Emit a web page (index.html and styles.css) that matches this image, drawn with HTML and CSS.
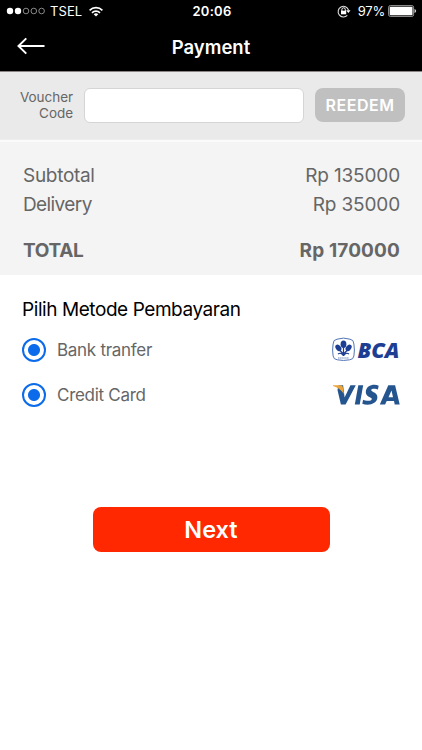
FILE: index.html
```html
<!DOCTYPE html>
<html lang="id">
<head>
<meta charset="utf-8">
<title>Payment</title>
<link rel="stylesheet" href="styles.css">
</head>
<body>
<header class="top">
  <div class="status">
    <div class="carrier">
      <svg class="dots" width="40" height="10" viewBox="0 0 40 10"><g fill="#fff"><circle cx="4" cy="5" r="3.2"/><circle cx="12" cy="5" r="3.2"/></g><g fill="none" stroke="#aaa" stroke-width=".8"><circle cx="20" cy="5" r="2.8"/><circle cx="27.8" cy="5" r="2.8"/><circle cx="35.6" cy="5" r="2.8"/></g></svg>
      <span class="network">TSEL</span>
      <svg class="wifi" width="14" height="11" viewBox="0 0 14 11"><g fill="none" stroke="#fff" stroke-width="1.7"><path d="M.6 4.3a9.2 9.2 0 0 1 12.8 0"/><path d="M3 6.8a5.8 5.8 0 0 1 8 0"/></g><path d="M4.7 8.2a3.4 3.4 0 0 1 4.6 0L7 10.6z" fill="#fff"/></svg>
    </div>
    <span class="clock">20:06</span>
    <div class="power">
      <svg class="lock" width="14" height="13" viewBox="0 0 14 13"><path d="M10.3 10.3A5.3 5.3 0 1 1 11.5 5" fill="none" stroke="#ddd" stroke-width="1.1"/><path d="M9.2 5.3h4.3l-2.1 2.8z" fill="#fff"/><path d="M4.9 6V4.5a1.7 1.7 0 0 1 3.4 0V6" fill="none" stroke="#fff"/><path d="M4 5.7h5.2v3.6H4z" fill="#fff"/></svg>
      <span class="percent">97%</span>
      <svg class="battery" width="29" height="12" viewBox="0 0 29 12"><rect x=".6" y=".6" width="25" height="10.8" rx="1.7" fill="none" stroke="#999"/><rect x="1.7" y="1.7" width="22.8" height="8.6" rx=".8" fill="#fff"/><path d="M26.5 4q1.7.3 1.7 2t-1.7 2z" fill="#ccc"/></svg>
    </div>
  </div>
  <div class="nav">
    <svg class="back" width="28" height="18" viewBox="0 0 28 18"><path d="M27.5 9H2M9.3 1.4 1.5 9l7.8 7.6" fill="none" stroke="#fff" stroke-width="2"/></svg>
    <h1 class="title">Payment</h1>
  </div>
</header>
<section class="voucher">
  <label class="voucher-label" for="code">Voucher<br>Code</label>
  <input class="voucher-input" id="code" type="text">
  <button class="redeem">REEDEM</button>
</section>
<section class="summary">
  <div class="line"><span class="subtotal">Subtotal</span><span class="amount">Rp 135000</span></div>
  <div class="line"><span class="delivery">Delivery</span><span class="amount">Rp 35000</span></div>
  <div class="line total"><span class="total-label">TOTAL</span><span class="total-amount">Rp 170000</span></div>
</section>
<main class="methods">
  <h2 class="heading">Pilih Metode Pembayaran</h2>
  <div class="method"><span class="radio"></span><span class="bank">Bank tranfer</span>
    <svg class="logo" width="70" height="26" viewBox="0 0 70 26">
      <path d="M7 2.200Q13.500 0 20 2.200 23.800 2.600 23.900 7q1 6 0 12-.5 3.500-4.200 3.800-6.200 1.300-12.400 0-3.700-.3-4.200-3.800-1-6 0-12Q3.200 2.600 7 2.200z" fill="#fff" stroke="#5374b5" stroke-width="1"/>
      <g fill="#1e3e93"><ellipse cx="13.500" cy="7.300" rx="2.900" ry="3.700"/><ellipse cx="8.400" cy="10.900" rx="2.500" ry="3.700" transform="rotate(-38 8.400 10.900)"/><ellipse cx="18.600" cy="10.900" rx="2.500" ry="3.700" transform="rotate(38 18.600 10.900)"/></g>
      <path d="M13.500 10v9M9 12.500l4 4M18 12.500l-4 4M8 17q3-2 5.200 1.500M19 17q-3-2-5.200 1.500" fill="none" stroke="#1e3e93" stroke-width="1.200"/>
      <path d="M8 21h11" stroke="#6c82b8" stroke-width="1" stroke-dasharray="1.500 .6"/>
      <text class="bca" x="27.500" y="20.800" textLength="42" lengthAdjust="spacingAndGlyphs">BCA</text>
    </svg>
  </div>
  <div class="method"><span class="radio"></span><span class="credit">Credit Card</span>
    <svg class="logo" width="70" height="26" viewBox="0 0 70 26">
      <path d="M8.500 3.200h4.600l1.500 12.300 5.800-12.300h5.400L15.600 22.500h-4.700L7.500 8z" fill="#25558f"/>
      <path d="M3 3.200h7.700q1.800 0 2.100 1.800l1.100 7Q10 5.800 3 4z" fill="#eaa43c"/>
      <path d="M28.300 3.200h4.900l-3.500 19.300h-4.900z" fill="#25558f"/>
      <path d="M48.700 3.700 47.900 7.500c-2.200-1-6.600-1.300-6.700.6 0 2 6.200 2.400 6.200 7 0 7.700-9.900 8.700-15.100 6.600l.8-4c2.700 1.500 8.700 1.700 8.700-.7 0-2.100-6-2-6-6.800 0-6.500 7.700-8.700 12.900-6.500z" fill="#25558f"/>
      <path fill-rule="evenodd" d="M58.300 3.200h6.800l4.600 19.300h-5l-.7-3.500h-7.300l-1.600 3.500h-5.300zM61.500 8.600l-3 6.700h4.500z" fill="#25558f"/>
    </svg>
  </div>
  <button class="next">Next</button>
</main>
</body>
</html>
```
FILE: styles.css
```css
* { box-sizing: border-box; }
body { margin: 0; width: 422px; height: 750px; overflow: hidden; background: #fff; color: #666; font-family: Inter, "Liberation Sans", sans-serif; }
svg { display: block; flex: none; }
button { border: 0; padding: 0; font-family: inherit; color: #fff; }
.top { height: 72px; background: #000; color: #fff; border-bottom: 1px solid #8c8586; }
.status { height: 22px; display: grid; grid-template-columns: 1fr auto 1fr; align-items: center; padding: 0 5px 0 6px; font-size: 13px; line-height: 22px; }
.carrier, .power { display: flex; align-items: center; }
.network { margin-left: 4px; letter-spacing: .1px; }
.wifi { margin-left: 7px; }
.clock { padding-left: 1px; font-weight: 600; letter-spacing: .3px; }
.power { justify-content: flex-end; }
.percent { margin: 0 3px 0 7px; letter-spacing: -.2px; }
.nav { height: 49px; display: grid; grid-template-columns: 45px 1fr 45px; align-items: center; }
.back { margin: -2px 0 0 17px; }
.title { margin: 0; text-align: center; font-size: 18.5px; font-weight: 600; letter-spacing: 0; }
.voucher { height: 68px; display: flex; align-items: flex-start; padding: 16px 17px 0 17px; background: #eaeaea; border-bottom: 1px solid #ededed; }
.voucher-label { width: 56px; padding-top: 1px; font-size: 13.5px; line-height: 16px; text-align: right; letter-spacing: -.05px; }
.voucher-input { width: 220px; height: 35px; margin-left: 11px; border: 1px solid #d5d5d5; border-radius: 6px; background: #fff; }
.redeem { width: 90px; height: 34px; margin-left: 11px; border-radius: 8px; background: #c0c0c0; font-size: 16px; font-weight: 600; letter-spacing: .5px; }
.summary { height: 135px; padding: 19px 22px 0 23px; background: #f4f4f4; border-top: 2px solid #fafafa; font-size: 19px; letter-spacing: -.3px; }
.line { height: 29px; display: flex; justify-content: space-between; line-height: 29px; }
.amount { letter-spacing: -.15px; }
.delivery { letter-spacing: -.6px; }
.total { margin-top: 17px; font-weight: 700; }
.total-amount { letter-spacing: .15px; }
.methods { display: flex; flex-direction: column; padding: 23px 22px 0; }
.heading { margin: 0 0 5px; color: #000; font-size: 19px; line-height: 24px; font-weight: 400; letter-spacing: -.43px; }
.method { height: 45px; display: flex; align-items: center; font-size: 17px; letter-spacing: -.28px; }
.radio { width: 24px; height: 24px; margin-right: 11px; border: 2.5px solid #0b6bea; border-radius: 50%; background: radial-gradient(circle, #0b6bea 5.5px, #fff 6.500px); }
.logo { margin-left: auto; overflow: visible; }
.bca { fill: #1e3e93; font: italic 800 21px "Open Sans", sans-serif; letter-spacing: 0; }
.next { width: 237px; height: 45px; margin: 90px auto 0; border-radius: 8px; background: #ff2800; font-size: 23.5px; font-weight: 600; }
```
